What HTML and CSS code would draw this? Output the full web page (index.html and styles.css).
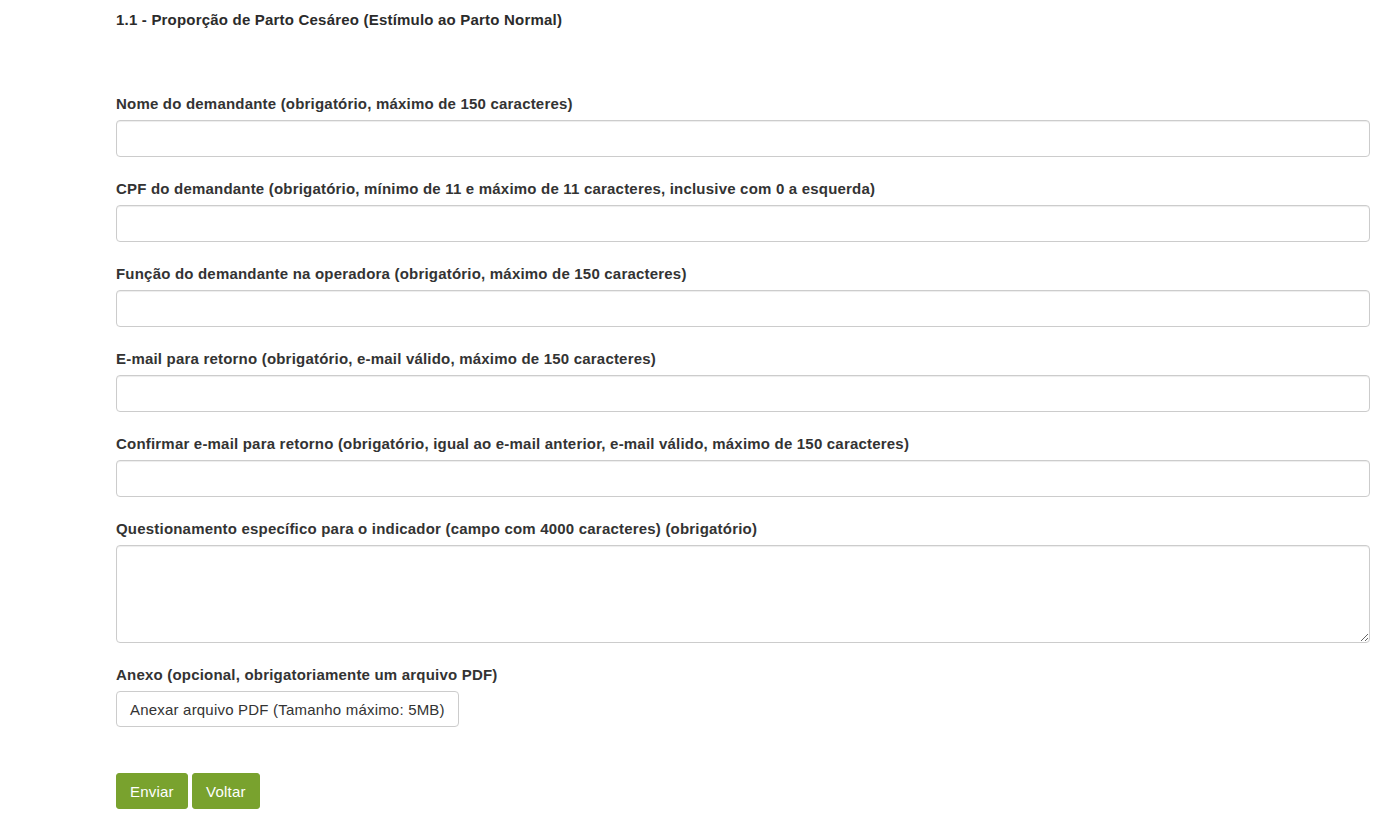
FILE: index.html
```html
<!DOCTYPE html>
<html>
<head>
	<title>Fale Conosco - Indicador</title>
	<meta charset="utf-8">
<link rel="stylesheet" href="styles.css">
</head>
<body>
<div class="conteudo">
	<h4 class="titulo">1.1 - Proporção de Parto Cesáreo (Estímulo ao Parto Normal)</h4>

	<form class="formulario">
		<div class="grupo">
			<label for="nome">Nome do demandante (obrigatório, máximo de 150 caracteres)</label>
			<input type="text" id="nome" class="campo" maxlength="150">
		</div>
		<div class="grupo">
			<label for="cpf">CPF do demandante (obrigatório, mínimo de 11 e máximo de 11 caracteres, inclusive com 0 a esquerda)</label>
			<input type="text" id="cpf" class="campo" maxlength="11">
		</div>
		<div class="grupo">
			<label for="funcao">Função do demandante na operadora (obrigatório, máximo de 150 caracteres)</label>
			<input type="text" id="funcao" class="campo" maxlength="150">
		</div>
		<div class="grupo">
			<label for="email">E-mail para retorno (obrigatório, e-mail válido, máximo de 150 caracteres)</label>
			<input type="text" id="email" class="campo" maxlength="150">
		</div>
		<div class="grupo">
			<label for="email2">Confirmar e-mail para retorno (obrigatório, igual ao e-mail anterior, e-mail válido, máximo de 150 caracteres)</label>
			<input type="text" id="email2" class="campo" maxlength="150">
		</div>
		<div class="grupo">
			<label for="questao">Questionamento específico para o indicador (campo com 4000 caracteres) (obrigatório)</label>
			<textarea id="questao" class="campo area" maxlength="4000"></textarea>
		</div>
		<div class="grupo">
			<label>Anexo (opcional, obrigatoriamente um arquivo PDF)</label>
			<button type="button" class="anexo">Anexar arquivo PDF (Tamanho máximo: 5MB)</button>
		</div>

		<div class="acoes">
			<button type="button" class="btn">Enviar</button>
			<button type="button" class="btn">Voltar</button>
		</div>
	</form>
</div>
</body>
</html>
```

FILE: styles.css
```css
body{
	margin:0;
	font-family:"Liberation Sans", Arial, sans-serif;
	font-size:15px;
	letter-spacing:0.2px;
	color:#333;
	background:#fff;
}
.conteudo{
	padding:11px 29px 0 116px;
}
.titulo{
	margin:0;
	font-size:15px;
	line-height:18px;
	font-weight:bold;
	color:#2b2b2b;
}
.formulario{
	margin-top:65px;
}
.grupo{
	margin-bottom:22px;
}
.grupo label{
	display:block;
	font-weight:bold;
	line-height:20px;
	margin-bottom:6px;
}
.campo{
	display:block;
	box-sizing:border-box;
	width:100%;
	height:37px;
	margin:0;
	padding:6px 12px;
	font-family:inherit;
	font-size:15px;
	color:#555;
	border:1px solid #ccc;
	border-radius:4px;
	box-shadow:inset 0 1px 1px rgba(0,0,0,.075);
}
.area{
	height:98px;
	resize:vertical;
}
.anexo{
	box-sizing:border-box;
	height:36px;
	padding:6px 13px;
	font-family:inherit;
	font-size:15px;
	letter-spacing:0.2px;
	color:#333;
	background:#fff;
	border:1px solid #ccc;
	border-radius:4px;
}
.acoes{
	padding-top:24px;
}
.btn{
	box-sizing:border-box;
	height:36px;
	padding:6px 13px;
	font-family:inherit;
	font-size:15px;
	letter-spacing:0.2px;
	color:#fff;
	background:#79a22e;
	border:1px solid #79a22e;
	border-radius:3px;
}
```
